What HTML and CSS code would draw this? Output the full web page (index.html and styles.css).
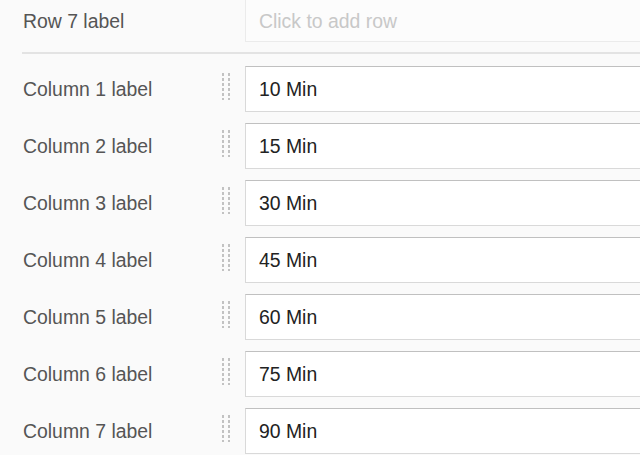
FILE: index.html
```html
<!DOCTYPE html>
<html lang="en">
  <head>
    <meta charset="utf-8" />
    <title>Grid question editor</title>
    <link rel="stylesheet" href="styles.css">
  </head>

  <body>
    <div class="grid-editor">
      <div class="row row-new">
        <span class="label">Row 7 label</span>
        <span class="handle-space"></span>
        <input class="field field-placeholder" type="text" placeholder="Click to add row" />
      </div>

      <hr class="divider" />

      <div class="row">
        <span class="label">Column 1 label</span>
        <svg class="handle" width="10" height="27" viewBox="0 0 10 27" aria-hidden="true">
          <use href="#dots" />
        </svg>
        <input class="field" type="text" value="10 Min" />
      </div>
      <div class="row">
        <span class="label">Column 2 label</span>
        <svg class="handle" width="10" height="27" viewBox="0 0 10 27" aria-hidden="true">
          <use href="#dots" />
        </svg>
        <input class="field" type="text" value="15 Min" />
      </div>
      <div class="row">
        <span class="label">Column 3 label</span>
        <svg class="handle" width="10" height="27" viewBox="0 0 10 27" aria-hidden="true">
          <use href="#dots" />
        </svg>
        <input class="field" type="text" value="30 Min" />
      </div>
      <div class="row">
        <span class="label">Column 4 label</span>
        <svg class="handle" width="10" height="27" viewBox="0 0 10 27" aria-hidden="true">
          <use href="#dots" />
        </svg>
        <input class="field" type="text" value="45 Min" />
      </div>
      <div class="row">
        <span class="label">Column 5 label</span>
        <svg class="handle" width="10" height="27" viewBox="0 0 10 27" aria-hidden="true">
          <use href="#dots" />
        </svg>
        <input class="field" type="text" value="60 Min" />
      </div>
      <div class="row">
        <span class="label">Column 6 label</span>
        <svg class="handle" width="10" height="27" viewBox="0 0 10 27" aria-hidden="true">
          <use href="#dots" />
        </svg>
        <input class="field" type="text" value="75 Min" />
      </div>
      <div class="row">
        <span class="label">Column 7 label</span>
        <svg class="handle" width="10" height="27" viewBox="0 0 10 27" aria-hidden="true">
          <use href="#dots" />
        </svg>
        <input class="field" type="text" value="90 Min" />
      </div>
    </div>

    <svg width="0" height="0" class="defs" aria-hidden="true">
      <defs>
        <g id="dots" fill="#c2c2c2">
          <rect x="0" y="0" width="2" height="3" /><rect x="6" y="0" width="2" height="3" />
          <rect x="0" y="5" width="2" height="3" /><rect x="6" y="5" width="2" height="3" />
          <rect x="0" y="10" width="2" height="3" /><rect x="6" y="10" width="2" height="3" />
          <rect x="0" y="15" width="2" height="3" /><rect x="6" y="15" width="2" height="3" />
          <rect x="0" y="20" width="2" height="3" /><rect x="6" y="20" width="2" height="3" />
          <rect x="0" y="25" width="2" height="2" /><rect x="6" y="25" width="2" height="2" />
        </g>
      </defs>
    </svg>
  </body>
</html>
```

FILE: styles.css
```css
html {
  background: #fafafa;
}

body {
  margin: 0;
  overflow: hidden;
  font-family: "Liberation Sans", Arial, sans-serif;
  font-size: 19.4px;
}

.grid-editor {
  margin-top: -4px;
  padding-left: 23px;
  width: 760px;
}

.row {
  display: flex;
  align-items: center;
  height: 46px;
  margin-bottom: 11px;
}

.row-new {
  margin-bottom: 10px;
}

.label {
  width: 199px;
  flex-shrink: 0;
  padding-top: 1px;
  color: #555;
}

.row-new .label {
  padding-top: 4px;
}

.handle,
.handle-space {
  width: 10px;
  height: 27px;
  flex-shrink: 0;
  margin-right: 13px;
  align-self: flex-start;
  margin-top: 7px;
}

.field {
  flex: 1;
  box-sizing: border-box;
  height: 46px;
  margin: 0;
  padding: 1px 13px 0;
  border: 1px solid #d9d9d9;
  border-top-color: #c0c0c0;
  background: #fff;
  font-family: inherit;
  font-size: 19.4px;
  color: #222;
  outline: none;
}

.field-placeholder {
  padding-top: 4px;
  border-color: #ebebeb;
  background: #fcfcfc;
}

.field::placeholder {
  color: #c8c8c8;
}

.divider {
  margin: 0 0 12px -1px;
  height: 2px;
  border: 0;
  background: #e3e3e3;
}

.defs {
  position: absolute;
}
```
